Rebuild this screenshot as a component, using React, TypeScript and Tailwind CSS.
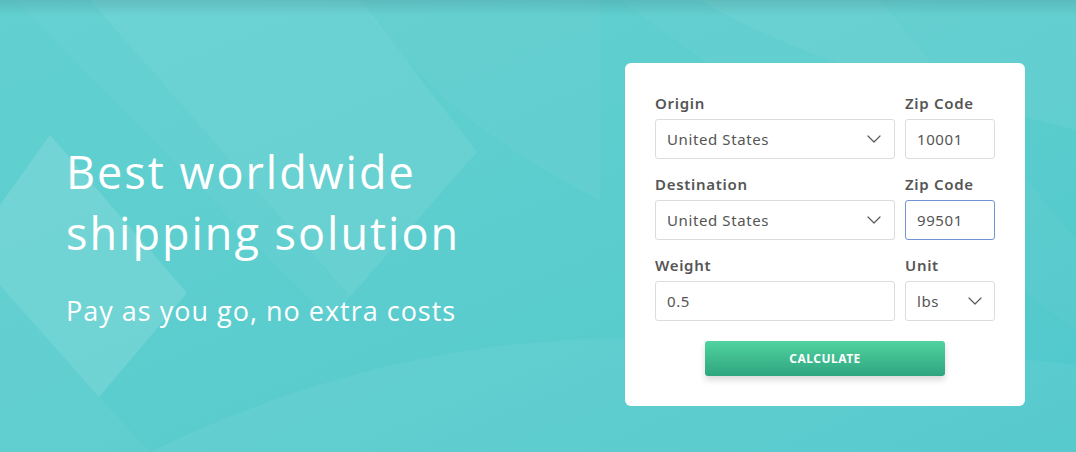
import React from "react"

const Chevron = () => (
	<svg width="14" height="8" viewBox="0 0 14 8" fill="none" className="shrink-0">
		<path d="M1 1l6 6 6-6" stroke="#5a5a5a" strokeWidth="1.2" strokeLinecap="round" strokeLinejoin="round" />
	</svg>
)

const Field = ({ label, children }: { label: string; children: React.ReactNode }) => (
	<div className="flex flex-col">
		<label className="h-5 mb-[6px] text-[15px] leading-5 font-semibold text-[#555] tracking-[0.7px]">{label}</label>
		{children}
	</div>
)

const boxCls =
	"h-10 w-full rounded-[3px] border bg-white flex items-center text-[15px] text-[#555] tracking-[0.6px]"

const SelectBox = ({ value, pr = "pr-[13px]" }: { value: string; pr?: string }) => (
	<div className={`${boxCls} border-[#dcdcdc] pl-[11px] ${pr} justify-between`}>
		<span>{value}</span>
		<Chevron />
	</div>
)

const InputBox = ({ value, focus = false }: { value: string; focus?: boolean }) => (
	<div className={`${boxCls} pl-[11px] ${focus ? "border-[#7094d4]" : "border-[#dcdcdc]"}`}>{value}</div>
)

export default function App() {
	return (
		<div
			className="relative w-full h-[452px] overflow-hidden bg-gradient-to-br from-[#62d0d1] via-[#5ccdce] to-[#4fc8cc]"
			style={{ fontFamily: '"Open Sans", "Lato", sans-serif' }}
		>
			{/* background facets */}
			<svg className="absolute inset-0 pointer-events-none" width="1076" height="452" viewBox="0 0 1076 452">
				<polygon points="90,0 360,0 477,152 350,297" fill="#fff" opacity="0.07" />
				<polygon points="0,205 50,135 187,293 99,397 0,285" fill="#fff" opacity="0.12" />
				<polygon points="15,0 90,0 350,297 330,320" fill="#fff" opacity="0.03" />
				<path d="M150,452 C300,380 450,340 620,338 C800,336 950,350 1076,365 L1076,452 Z" fill="#fff" opacity="0.05" />
				<path d="M360,0 C420,90 500,150 600,200 L600,0 Z" fill="#fff" opacity="0.04" />
				<path d="M700,0 C800,60 950,100 1076,130 L1076,0 Z" fill="#fff" opacity="0.05" />
				<polygon points="0,285 99,397 150,452 0,452" fill="#fff" opacity="0.03" />
				<polygon points="620,0 880,0 1076,240 1076,330" fill="#fff" opacity="0.03" />
			</svg>
			<div className="absolute inset-x-0 top-0 h-[16px] bg-gradient-to-b from-[#000]/10 to-transparent" />

			<div className="relative flex justify-between pl-[66px] pr-[51px]">
				<div className="pt-[141px] text-white">
					<h1 className="text-[45px] leading-[61px] font-normal tracking-[2px]">
						Best worldwide
						<br />
						shipping solution
					</h1>
					<p className="mt-[30px] text-[27px] leading-[36px] tracking-[1px]">Pay as you go, no extra costs</p>
				</div>

				<div
					className="mt-[63px] w-[400px] h-[343px] rounded-[6px] bg-white px-[30px] pt-[30px]"
					style={{ fontFamily: '"Noto Sans", "Open Sans", sans-serif' }}
				>
					<div className="grid grid-cols-[240px_90px] gap-x-[10px] gap-y-[15px]">
						<Field label="Origin">
							<SelectBox value="United States" />
						</Field>
						<Field label="Zip Code">
							<InputBox value="10001" />
						</Field>
						<Field label="Destination">
							<SelectBox value="United States" />
						</Field>
						<Field label="Zip Code">
							<InputBox value="99501" focus />
						</Field>
						<Field label="Weight">
							<InputBox value="0.5" />
						</Field>
						<Field label="Unit">
							<SelectBox value="lbs" pr="pr-[12px]" />
						</Field>
					</div>
					<div className="flex justify-center mt-5">
						<button
							type="button"
							className="w-[240px] h-[35px] rounded-[3px] bg-gradient-to-b from-[#4fd3a0] to-[#2fa57f] text-white text-[12px] font-bold tracking-[0.5px] shadow-[0_4px_6px_rgba(0,0,0,0.15)]"
						>
							CALCULATE
						</button>
					</div>
				</div>
			</div>
		</div>
	)
}
